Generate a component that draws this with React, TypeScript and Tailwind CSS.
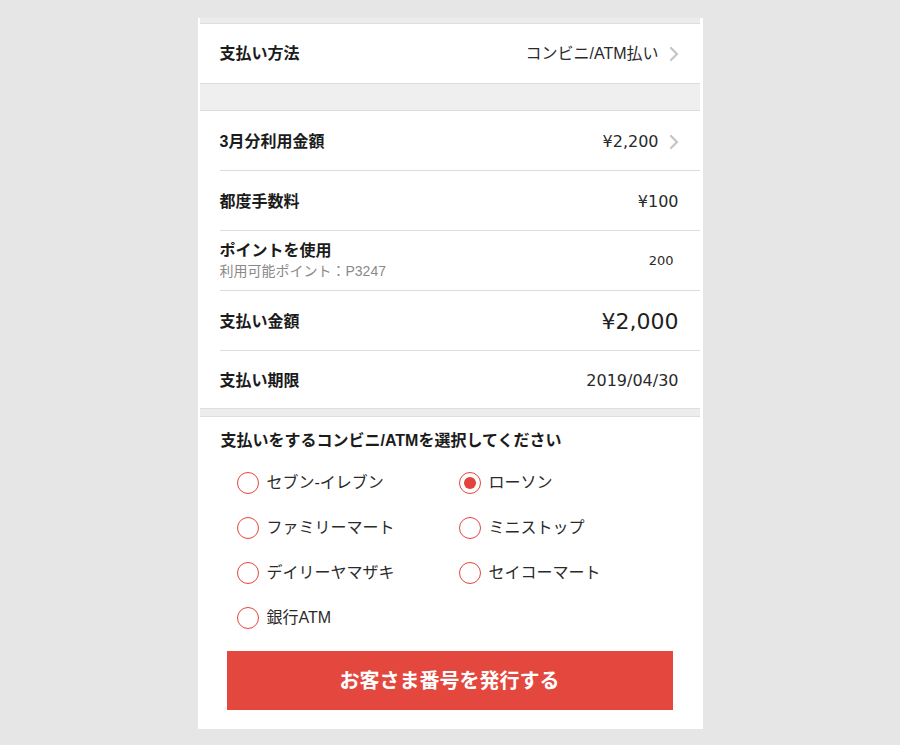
import React, { useState } from 'react';

const FONT = '"Liberation Sans", "Noto Sans CJK JP", sans-serif';
const NUM_FONT = '"DejaVu Sans", "Noto Sans CJK JP", sans-serif';

const Chevron = () => (
  <svg width="10" height="16" viewBox="0 0 10 16" className="ml-[10px] shrink-0">
    <path d="M2 2l6 6-6 6" fill="none" stroke="#c5c5c7" strokeWidth="2.2" strokeLinecap="round" strokeLinejoin="round" />
  </svg>
);

interface RowProps {
  label: React.ReactNode;
  children: React.ReactNode;
  last?: boolean;
  height?: string;
}

const Row: React.FC<RowProps> = ({ label, children, last, height = 'h-[60px]' }) => (
  <div className={`ml-[20px] flex items-center justify-between pr-[21px] pt-[2px] ${height} ${last ? '' : 'border-b border-[#dcdcdc]'}`}>
    <div className="text-[16px] font-bold text-[#1b1b1b]">{label}</div>
    <div className="flex items-center text-[16px] text-[#2a2a2a]">{children}</div>
  </div>
);

const Num: React.FC<{ children: React.ReactNode; className?: string }> = ({ children, className = '' }) => (
  <span className={className} style={{ fontFamily: NUM_FONT }}>
    {children}
  </span>
);

const stores = [
  'セブン-イレブン',
  'ローソン',
  'ファミリーマート',
  'ミニストップ',
  'デイリーヤマザキ',
  'セイコーマート',
  '銀行ATM',
];

const App: React.FC = () => {
  const [selected, setSelected] = useState('ローソン');

  return (
    <div className="min-h-screen bg-[#e6e6e6] pt-[16px]" style={{ fontFamily: FONT }}>
      <div className="mx-auto w-[505px] bg-white pb-[19px] pl-[2px] pr-[3px]">
        {/* top strip */}
        <div className="mt-[2px] h-[6px] border-b border-[#dedede] bg-[#ececec]" />

        <div className="ml-[20px] flex h-[59px] items-center justify-between pr-[21px]">
          <div className="text-[16px] font-bold text-[#1b1b1b]">支払い方法</div>
          <div className="flex items-center text-[16px] text-[#2a2a2a]">
            コンビニ/ATM払い
            <Chevron />
          </div>
        </div>

        <div className="h-[28px] border-y border-[#dcdcdc] bg-[#efefef]" />

        <Row label="3月分利用金額">
          <Num>¥2,200</Num>
          <Chevron />
        </Row>
        <Row label="都度手数料">
          <Num>¥100</Num>
        </Row>
        <div className="ml-[20px] flex h-[60px] items-center justify-between border-b border-[#dcdcdc] pr-[26px] pt-[1px]">
          <div>
            <div className="text-[16px] font-bold leading-[20px] text-[#1b1b1b]">ポイントを使用</div>
            <div className="text-[14px] leading-[20px] text-[#8a8a8a]">利用可能ポイント：P3247</div>
          </div>
          <Num className="text-[13px] text-[#2a2a2a]">200</Num>
        </div>
        <Row label="支払い金額">
          <Num className="text-[22px] text-[#1f1f1f]">¥2,000</Num>
        </Row>
        <Row label="支払い期限" last height="h-[57px]">
          <Num>2019/04/30</Num>
        </Row>

        <div className="h-[9px] border-y border-[#dedede] bg-[#ededed]" />

        <div className="pl-[21px] pt-[13px] text-[16px] font-bold leading-[22px] text-[#1b1b1b]">
          支払いをするコンビニ/ATMを選択してください
        </div>

        <div className="mt-[8px] grid grid-cols-[222px_1fr] pl-[37px]">
          {stores.map((s) => {
            const on = s === selected;
            return (
              <button
                key={s}
                type="button"
                onClick={() => setSelected(s)}
                className="flex h-[45px] items-center gap-[8px] text-left"
              >
                <span className="flex h-[22px] w-[22px] items-center justify-center rounded-full border-[1.5px] border-[#e6443d]">
                  {on && <span className="h-[12px] w-[12px] rounded-full bg-[#e4433b]" />}
                </span>
                <span className="text-[16px] text-[#2a2a2a]">{s}</span>
              </button>
            );
          })}
        </div>

        <button
          type="button"
          className="mx-auto mt-[11px] flex h-[59px] w-[446px] items-center justify-center bg-[#e4473e] text-[20px] font-bold text-white"
        >
          お客さま番号を発行する
        </button>
      </div>
    </div>
  );
};

export default App;
